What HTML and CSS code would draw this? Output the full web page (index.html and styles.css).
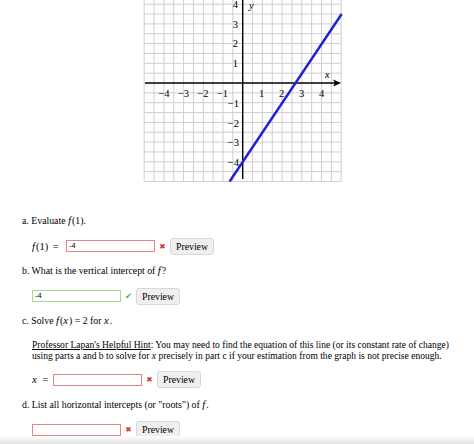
FILE: index.html
```html
<!DOCTYPE html>
<html>
<head>
<meta charset="utf-8">
<link rel="stylesheet" href="styles.css">
</head>
<body>
<div class="page">
  <svg class="graph" width="210" height="205" viewBox="0 0 210 205" xmlns="http://www.w3.org/2000/svg">
    <g stroke="#cfcfcf" stroke-width="1">
      <line x1="4.2" y1="4.5" x2="4.2" y2="201.5"/>
      <line x1="14.05" y1="4.5" x2="14.05" y2="201.5"/>
      <line x1="23.9" y1="4.5" x2="23.9" y2="201.5"/>
      <line x1="33.75" y1="4.5" x2="33.75" y2="201.5"/>
      <line x1="43.6" y1="4.5" x2="43.6" y2="201.5"/>
      <line x1="53.45" y1="4.5" x2="53.45" y2="201.5"/>
      <line x1="63.3" y1="4.5" x2="63.3" y2="201.5"/>
      <line x1="73.15" y1="4.5" x2="73.15" y2="201.5"/>
      <line x1="83" y1="4.5" x2="83" y2="201.5"/>
      <line x1="92.85" y1="4.5" x2="92.85" y2="201.5"/>
      <line x1="112.55" y1="4.5" x2="112.55" y2="201.5"/>
      <line x1="122.4" y1="4.5" x2="122.4" y2="201.5"/>
      <line x1="132.25" y1="4.5" x2="132.25" y2="201.5"/>
      <line x1="142.1" y1="4.5" x2="142.1" y2="201.5"/>
      <line x1="151.95" y1="4.5" x2="151.95" y2="201.5"/>
      <line x1="161.8" y1="4.5" x2="161.8" y2="201.5"/>
      <line x1="171.65" y1="4.5" x2="171.65" y2="201.5"/>
      <line x1="181.5" y1="4.5" x2="181.5" y2="201.5"/>
      <line x1="191.35" y1="4.5" x2="191.35" y2="201.5"/>
      <line x1="201.2" y1="4.5" x2="201.2" y2="201.5"/>
      <line x1="4.2" y1="4.5" x2="201.2" y2="4.5"/>
      <line x1="4.2" y1="14.35" x2="201.2" y2="14.35"/>
      <line x1="4.2" y1="24.2" x2="201.2" y2="24.2"/>
      <line x1="4.2" y1="34.05" x2="201.2" y2="34.05"/>
      <line x1="4.2" y1="43.9" x2="201.2" y2="43.9"/>
      <line x1="4.2" y1="53.75" x2="201.2" y2="53.75"/>
      <line x1="4.2" y1="63.6" x2="201.2" y2="63.6"/>
      <line x1="4.2" y1="73.45" x2="201.2" y2="73.45"/>
      <line x1="4.2" y1="83.3" x2="201.2" y2="83.3"/>
      <line x1="4.2" y1="93.15" x2="201.2" y2="93.15"/>
      <line x1="4.2" y1="112.85" x2="201.2" y2="112.85"/>
      <line x1="4.2" y1="122.7" x2="201.2" y2="122.7"/>
      <line x1="4.2" y1="132.55" x2="201.2" y2="132.55"/>
      <line x1="4.2" y1="142.4" x2="201.2" y2="142.4"/>
      <line x1="4.2" y1="152.25" x2="201.2" y2="152.25"/>
      <line x1="4.2" y1="162.1" x2="201.2" y2="162.1"/>
      <line x1="4.2" y1="171.95" x2="201.2" y2="171.95"/>
      <line x1="4.2" y1="181.8" x2="201.2" y2="181.8"/>
      <line x1="4.2" y1="191.65" x2="201.2" y2="191.65"/>
      <line x1="4.2" y1="201.5" x2="201.2" y2="201.5"/>
    </g>
    <g stroke="#000" stroke-width="1.4">
      <line x1="5" y1="103" x2="196" y2="103"/>
      <line x1="102.7" y1="0" x2="102.7" y2="199"/>
    </g>
    <path d="M201 103 L193 99.5 L195 103 L193 106.5 Z" fill="#000"/>
    <line x1="89.6" y1="201.5" x2="201.7" y2="34" stroke="#1f1fd6" stroke-width="2.4"/>
    <g font-family="Liberation Serif, serif" font-size="10.5" fill="#000">
      <text x="24" y="117" text-anchor="middle">−4</text>
      <text x="43.5" y="117" text-anchor="middle">−3</text>
      <text x="63" y="117" text-anchor="middle">−2</text>
      <text x="82.5" y="117" text-anchor="middle">−1</text>
      <text x="121.7" y="117" text-anchor="middle">1</text>
      <text x="141.5" y="117" text-anchor="middle">2</text>
      <text x="161.5" y="117" text-anchor="middle">3</text>
      <text x="181.5" y="117" text-anchor="middle">4</text>
      <text x="185" y="98" font-style="italic">x</text>
      <text x="98" y="28" text-anchor="end">4</text>
      <text x="98" y="47.5" text-anchor="end">3</text>
      <text x="98" y="67" text-anchor="end">2</text>
      <text x="98" y="87" text-anchor="end">1</text>
      <text x="99" y="127" text-anchor="end">−1</text>
      <text x="99" y="146.5" text-anchor="end">−2</text>
      <text x="99" y="166" text-anchor="end">−3</text>
      <text x="99" y="186" text-anchor="end">−4</text>
      <text x="109" y="28.5" font-style="italic">y</text>
    </g>
  </svg>

  <div class="parts">
    <p class="q">a. Evaluate <i class="mv">f</i>(1).</p>
    <div class="row">
      <span class="math m-f"><i class="mv">f</i>(1) =</span>
      <span class="field bad">-4</span>
      <span class="mark x">✖</span>
      <span class="btn">Preview</span>
    </div>

    <p class="q">b. What is the vertical intercept of <i class="mv">f</i>?</p>
    <div class="row">
      <span class="field good">-4</span>
      <span class="mark ok">✔</span>
      <span class="btn">Preview</span>
    </div>

    <p class="q">c. Solve <i class="mv">f</i>(<i class="mv">x</i>) = 2 for <i class="mv">x</i>.</p>
    <p class="hint"><u>Professor Lapan's Helpful Hint</u>: You may need to find the equation of this line (or its constant rate of change) using parts a and b to solve for <i>x</i> precisely in part c if your estimation from the graph is not precise enough.</p>
    <div class="row">
      <span class="math m-x"><i class="mv">x</i> =</span>
      <span class="field bad"></span>
      <span class="mark x">✖</span>
      <span class="btn">Preview</span>
    </div>

    <p class="q">d. List all horizontal intercepts (or "roots") of <i class="mv">f</i>.</p>
    <div class="row">
      <span class="field bad"></span>
      <span class="mark x">✖</span>
      <span class="btn">Preview</span>
    </div>
  </div>
</div>
<div class="shade"></div>
</body>
</html>
```

FILE: styles.css
```css
html, body {
  margin: 0;
  padding: 0;
  background: #fff;
  overflow: hidden;
}
body {
  font-family: "Liberation Serif", "Times New Roman", serif;
  font-size: 9.8px;
  color: #000;
  width: 474px;
  height: 444px;
}
.graph {
  display: block;
  margin: -20px 0 0 140px;
}
.parts {
  padding-left: 22px;
  padding-top: 30px;
}
.q {
  margin: 0;
  height: 12px;
  line-height: 12px;
  white-space: nowrap;
}
.mv {
  font-size: 10.8px;
  line-height: 0;
  padding-right: 1px;
}
.row {
  display: flex;
  align-items: center;
  height: 17px;
  margin: 10.5px 0 10.5px 10px;
}
.math {
  font-size: 10.5px;
  white-space: nowrap;
  word-spacing: 2px;
}
.m-f {
  width: 34px;
}
.m-x {
  width: 21px;
}
.field {
  box-sizing: border-box;
  width: 89px;
  height: 12px;
  border: 1px solid #e58585;
  background: #fff;
  font-family: "Liberation Sans", Arial, sans-serif;
  font-size: 7.5px;
  line-height: 10px;
  padding-left: 2px;
  color: #000;
}
.field.good {
  border-color: #9ddf8f;
}
.mark {
  font-size: 7.5px;
  width: 15px;
  text-align: center;
  font-family: "DejaVu Sans", sans-serif;
}
.mark.x { color: #c93b3b; }
.mark.ok { color: #5bae4f; font-size: 8.5px; }
.btn {
  box-sizing: border-box;
  height: 17px;
  width: 44px;
  border: 1px solid #d8d8d8;
  border-radius: 3px;
  background: #efefef;
  text-align: center;
  line-height: 15px;
  font-size: 9.8px;
}
.hint {
  margin: 11.5px 0 0 10px;
  height: 22px;
  line-height: 11px;
  font-size: 9.55px;
  width: 430px;
}
.shade {
  position: fixed;
  left: 0;
  right: 0;
  bottom: 0;
  height: 8px;
  background: linear-gradient(#ffffff, #e2e2e2);
}
```
